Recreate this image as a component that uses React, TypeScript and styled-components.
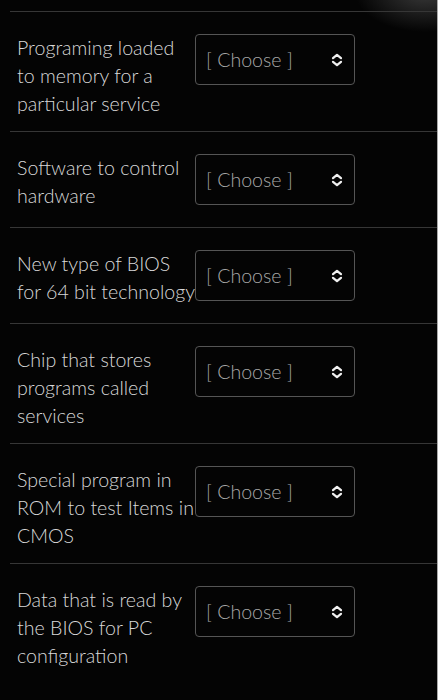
import React from "react";
import styled, { createGlobalStyle } from "styled-components";

const Global = createGlobalStyle`
  html, body {
    margin: 0;
    padding: 0;
    background: #040404;
  }
  body {
    font-family: Lato, "Open Sans", sans-serif;
    -webkit-font-smoothing: antialiased;
  }
`;

const Page = styled.div`
  width: 438px;
  height: 700px;
  box-sizing: border-box;
  padding-top: 11px;
  border-right: 1px solid #a9a9a9;
  overflow: hidden;
  background:
    radial-gradient(ellipse 70px 40px at 425px -8px, rgba(120, 120, 120, 0.45), rgba(40, 40, 40, 0) 100%),
    #040404;
`;

const Row = styled.div`
  display: flex;
  align-items: flex-start;
  margin-left: 10px;
  padding: 22px 0 13px 7px;
  border-top: 1px solid #363636;
`;

const Label = styled.div`
  width: 178px;
  flex: none;
  font-size: 19.6px;
  line-height: 28px;
  color: #d8d8d8;
  font-weight: 300;
`;

const Select = styled.div`
  width: 160px;
  height: 51px;
  box-sizing: border-box;
  margin-bottom: 9px;
  border: 1px solid #555;
  border-radius: 4px;
  display: flex;
  align-items: center;
  justify-content: space-between;
  padding: 0 11px 0 10px;
  color: #a8a8a8;
  font-size: 19.6px;
  font-weight: 300;
`;

const Chevrons = () => (
  <svg width="12" height="14" viewBox="0 0 12 14" fill="none">
    <path d="M2 5.2 L6 1.8 L10 5.2" stroke="#f0f0f0" strokeWidth="2.2" strokeLinecap="round" strokeLinejoin="round" />
    <path d="M2 8.8 L6 12.2 L10 8.8" stroke="#f0f0f0" strokeWidth="2.2" strokeLinecap="round" strokeLinejoin="round" />
  </svg>
);

const items = [
  "Programing loaded to memory for a particular service",
  "Software to control hardware",
  "New type of BIOS for 64 bit technology",
  "Chip that stores programs called services",
  "Special program in ROM to test Items in CMOS",
  "Data that is read by the BIOS for PC configuration",
];

export default function App() {
  return (
    <>
      <Global />
      <Page>
        {items.map((t) => (
          <Row key={t}>
            <Label>{t}</Label>
            <Select>
              <span>[ Choose ]</span>
              <Chevrons />
            </Select>
          </Row>
        ))}
      </Page>
    </>
  );
}
